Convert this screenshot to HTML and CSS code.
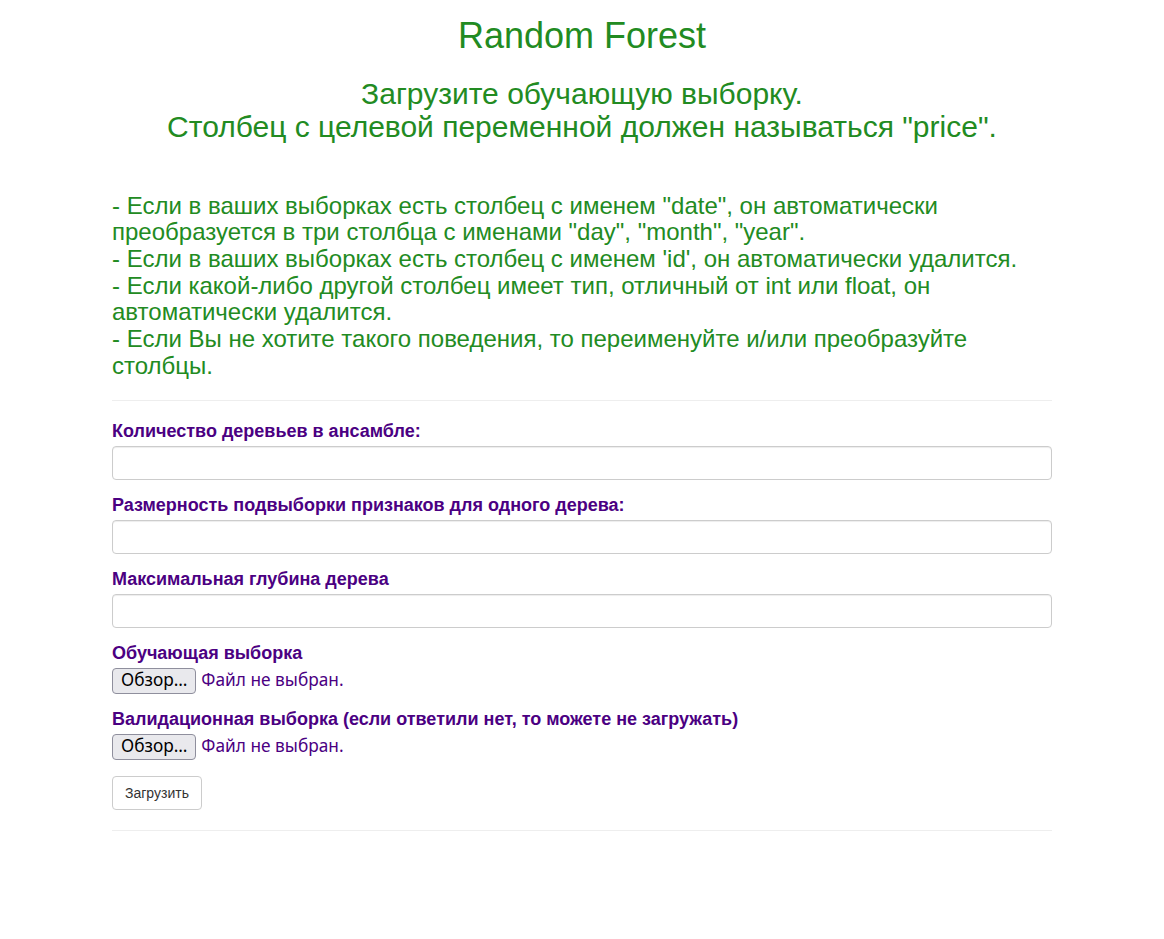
FILE: index.html
```html
<!DOCTYPE html>
<html lang="ru">
<head>
<meta charset="utf-8">
<title>Random Forest</title>
<link rel="stylesheet" href="styles.css">
</head>
<body>
<div class="container">
  <h1 class="title">Random Forest</h1>
  <h2 class="subtitle">Загрузите обучающую выборку.<br>Столбец с целевой переменной должен называться "price".</h2>
  <h3 class="notes">- Если в ваших выборках есть столбец с именем "date", он автоматически преобразуется в три столбца с именами "day", "month", "year".<br>- Если в ваших выборках есть столбец с именем 'id', он автоматически удалится.<br>- Если какой-либо другой столбец имеет тип, отличный от int или float, он автоматически удалится.<br>- Если Вы не хотите такого поведения, то переименуйте и/или преобразуйте столбцы.</h3>
  <hr class="rule">
  <form class="form">
    <div class="form-group">
      <label class="label">Количество деревьев в ансамбле:</label>
      <input class="form-control" type="text">
    </div>
    <div class="form-group">
      <label class="label">Размерность подвыборки признаков для одного дерева:</label>
      <input class="form-control" type="text">
    </div>
    <div class="form-group">
      <label class="label">Максимальная глубина дерева</label>
      <input class="form-control" type="text">
    </div>
    <div class="form-group file-group">
      <label class="label">Обучающая выборка</label>
      <div class="file-input"><span class="file-btn">Обзор…</span><span class="file-name">Файл не выбран.</span></div>
    </div>
    <div class="form-group file-group">
      <label class="label">Валидационная выборка (если ответили нет, то можете не загружать)</label>
      <div class="file-input"><span class="file-btn">Обзор…</span><span class="file-name">Файл не выбран.</span></div>
    </div>
    <button class="btn" type="button">Загрузить</button>
  </form>
  <hr class="rule bottom-rule">
</div>
</body>
</html>
```

FILE: styles.css
```css
* { box-sizing: border-box; }
html, body { margin: 0; padding: 0; background: #fff; }
body {
  font-family: "Liberation Sans", Arial, sans-serif;
  font-size: 14px;
  line-height: 1.42857;
  color: #333;
}
.container {
  width: 970px;
  margin: 0 auto;
  padding: 0 15px;
}
.title {
  font-size: 36px;
  font-weight: 400;
  line-height: 1.1;
  color: #228b22;
  text-align: center;
  margin: 16px 0 0;
}
.subtitle {
  font-size: 30px;
  font-weight: 400;
  line-height: 1.1;
  color: #228b22;
  text-align: center;
  margin: 21px 0 0;
}
.notes {
  font-size: 24px;
  font-weight: 400;
  line-height: 26.7px;
  color: #228b22;
  margin: 50px 0 0;
}
.rule {
  border: 0;
  border-top: 1px solid #eee;
  margin: 20px 0;
}
.form-group { margin-bottom: 15px; }
.label {
  display: block;
  font-weight: 700;
  font-size: 18px;
  line-height: 20px;
  color: #4b0082;
  margin-bottom: 5px;
}
.form-control {
  display: block;
  width: 100%;
  height: 34px;
  padding: 6px 12px;
  font-size: 14px;
  border: 1px solid #ccc;
  border-radius: 4px;
  box-shadow: inset 0 1px 1px rgba(0,0,0,0.075);
  background: #fff;
}
.file-input {
  display: flex;
  align-items: center;
  font-family: "Noto Sans", "DejaVu Sans", sans-serif;
  font-size: 17.3px;
  height: 26px;
}
.file-btn {
  display: inline-flex;
  align-items: center;
  height: 26px;
  padding: 0 8px;
  color: #000;
  background: #e9e9ed;
  border: 1px solid #8f8f9d;
  border-radius: 4px;
  margin-right: 5px;
}
.file-name { color: #4b0082; }
.btn {
  display: inline-block;
  margin-top: 1px;
  height: 34px;
  padding: 6px 12px;
  font-family: "Liberation Sans", Arial, sans-serif;
  font-size: 14px;
  line-height: 20px;
  color: #333;
  background: #fff;
  border: 1px solid #ccc;
  border-radius: 4px;
}
.bottom-rule { margin-top: 20px; }
```
